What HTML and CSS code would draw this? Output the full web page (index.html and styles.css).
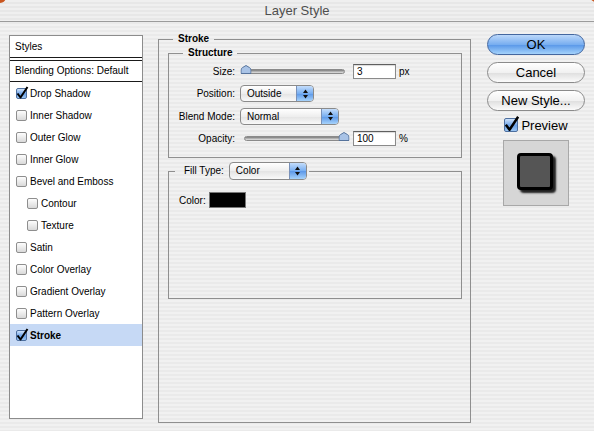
FILE: index.html
```html
<!DOCTYPE html>
<html lang="en">
<head>
    <meta charset="UTF-8">
    <meta name="viewport" content="width=device-width, initial-scale=1.0">
    <title>Layer Style</title>
    <link rel="stylesheet" href="styles.css">
</head>
<body>
    <div class="window">
        <span class="light light-left"></span>
        <span class="light light-right"></span>
        <div class="titlebar">Layer Style</div>

        <div class="content">
            <!-- Effects list -->
            <div class="styles-list">
                <div class="list-head">Styles</div>
                <div class="list-blend">Blending Options: Default</div>
                <ul class="effects">
                    <li><span class="check on"><svg viewBox="0 0 13 13"><path d="M1.5 5.5 L4.5 9.5 L11.5 -1"/></svg></span>Drop Shadow</li>
                    <li><span class="check"></span>Inner Shadow</li>
                    <li><span class="check"></span>Outer Glow</li>
                    <li><span class="check"></span>Inner Glow</li>
                    <li><span class="check"></span>Bevel and Emboss</li>
                    <li class="sub"><span class="check"></span>Contour</li>
                    <li class="sub"><span class="check"></span>Texture</li>
                    <li><span class="check"></span>Satin</li>
                    <li><span class="check"></span>Color Overlay</li>
                    <li><span class="check"></span>Gradient Overlay</li>
                    <li><span class="check"></span>Pattern Overlay</li>
                    <li class="selected"><span class="check on"><svg viewBox="0 0 13 13"><path d="M1.5 5.5 L4.5 9.5 L11.5 -1"/></svg></span>Stroke</li>
                </ul>
            </div>

            <!-- Stroke settings -->
            <fieldset class="group stroke">
                <legend>Stroke</legend>

                <fieldset class="group structure">
                    <legend>Structure</legend>
                    <div class="rows">
                        <label>Size:</label>
                        <div class="slider"><svg class="thumb" style="left: 1%" viewBox="0 0 11 9"><path d="M0.5 8.5 V5 Q0.5 3.5 2 2.6 L5.5 0.5 L9 2.6 Q10.5 3.5 10.5 5 V8.5 Z"/></svg></div>
                        <input type="text" value="3">
                        <span class="unit">px</span>

                        <label>Position:</label>
                        <span class="popup popup-position"><span class="popup-label">Outside</span><span class="popup-arrows"><svg viewBox="0 0 5 10"><path d="M0 4 L2.5 0.5 L5 4 Z M0 6 L2.5 9.5 L5 6 Z"/></svg></span></span>
                        <span></span>
                        <span></span>

                        <label>Blend Mode:</label>
                        <span class="popup popup-blend"><span class="popup-label">Normal</span><span class="popup-arrows"><svg viewBox="0 0 5 10"><path d="M0 4 L2.5 0.5 L5 4 Z M0 6 L2.5 9.5 L5 6 Z"/></svg></span></span>
                        <span></span>
                        <span></span>

                        <label>Opacity:</label>
                        <div class="slider"><svg class="thumb" style="left: 100%" viewBox="0 0 11 9"><path d="M0.5 8.5 V5 Q0.5 3.5 2 2.6 L5.5 0.5 L9 2.6 Q10.5 3.5 10.5 5 V8.5 Z"/></svg></div>
                        <input type="text" value="100">
                        <span class="unit">%</span>
                    </div>
                </fieldset>

                <fieldset class="group fill">
                    <legend>
                        <span>Fill Type:</span>
                        <span class="popup popup-fill"><span class="popup-label">Color</span><span class="popup-arrows"><svg viewBox="0 0 5 10"><path d="M0 4 L2.5 0.5 L5 4 Z M0 6 L2.5 9.5 L5 6 Z"/></svg></span></span>
                    </legend>
                    <div class="color-row">
                        <span>Color:</span>
                        <span class="swatch"></span>
                    </div>
                </fieldset>
            </fieldset>

            <!-- Dialog buttons -->
            <div class="actions">
                <button class="btn btn-default">OK</button>
                <button class="btn">Cancel</button>
                <button class="btn btn-last">New Style...</button>
                <div class="preview-toggle">
                    <span class="check big on"><svg viewBox="0 0 13 13"><path d="M1.5 5.5 L4.5 9.5 L11.5 -1"/></svg></span>
                    <span>Preview</span>
                </div>
                <div class="preview-box">
                    <div class="preview-swatch"></div>
                </div>
            </div>
        </div>
    </div>
</body>
</html>
```

FILE: styles.css
```css
/* Reset */
* {
    margin: 0;
    padding: 0;
    box-sizing: border-box;
}

body {
    width: 594px;
    height: 431px;
    overflow: hidden;
    font-family: "Liberation Sans", Arial, sans-serif;
    font-size: 10px;
    color: #000;
}

/* Window with pinstripes */
.window {
    position: relative;
    width: 594px;
    height: 431px;
    overflow: hidden;
    background: repeating-linear-gradient(to bottom, #f1f1f1 0 2px, #eaeaea 2px 4px);
}

.light {
    position: absolute;
    width: 12px;
    height: 12px;
    border-radius: 50%;
    background: #c9561f;
}

.light-left {
    left: -6px;
    top: -9px;
}

.light-right {
    right: -8px;
    top: -10px;
}

.titlebar {
    height: 22px;
    border-bottom: 1px solid #9b9b9b;
    background: repeating-linear-gradient(to bottom, #efefef 0 2px, #e7e7e7 2px 4px);
    text-align: center;
    font-size: 13px;
    line-height: 21px;
    color: #4e4e4e;
}

.content {
    display: flex;
    align-items: flex-start;
}

/* Styles list */
.styles-list {
    margin: 13px 0 0 9px;
    width: 134px;
    height: 384px;
    border: 1px solid #8c8c8c;
    background: #fff;
}

.list-head {
    height: 22px;
    padding-left: 5px;
    line-height: 21px;
    border-bottom: 1px solid #1a1a1a;
}

.list-blend {
    margin-top: 2px;
    height: 22px;
    padding-left: 5px;
    line-height: 20px;
    border-top: 1px solid #1a1a1a;
    border-bottom: 1px solid #1a1a1a;
}

.effects {
    list-style: none;
}

.effects li {
    display: flex;
    align-items: center;
    gap: 3px;
    height: 22px;
    padding-left: 6px;
}

.effects li.sub {
    padding-left: 17px;
}

.effects li.selected {
    background: #c6d9f5;
    font-weight: bold;
}

/* Checkboxes */
.check {
    position: relative;
    flex: none;
    width: 11px;
    height: 11px;
    border: 1px solid #8e8e8e;
    border-radius: 2px;
    background: linear-gradient(#fdfdfd, #d9d9d9);
}

.check.on {
    border-color: #4d6f9f;
    background: linear-gradient(#cfe3fb, #6aa1e8 55%, #9cc6f3);
}

.check svg {
    position: absolute;
    left: -1px;
    top: -1px;
    width: 13px;
    height: 13px;
    overflow: visible;
}

.check svg path {
    fill: none;
    stroke: #000;
    stroke-width: 2;
    stroke-linejoin: round;
}

.check.big {
    width: 14px;
    height: 14px;
}

.check.big svg {
    width: 16px;
    height: 16px;
}

/* Group boxes */
fieldset.group {
    border: 1px solid #8f8f8f;
    padding: 0;
    min-width: 0;
}

fieldset.group legend {
    margin-left: 14px;
    padding: 0 5px;
    font-weight: bold;
    line-height: 12px;
}

.stroke {
    margin: 11px 0 0 15px;
    width: 313px;
    height: 390px;
}

.structure {
    margin: 2px 8px 0 9px;
    height: 111px;
}

.rows {
    display: grid;
    grid-template-columns: 66px 108px 43px auto;
    grid-auto-rows: 18px;
    column-gap: 5px;
    row-gap: 4.5px;
    align-items: center;
    padding-top: 3px;
}

.rows label {
    text-align: right;
}

.rows input {
    width: 43px;
    height: 15px;
    padding-left: 3px;
    border: 1px solid #8a8a8a;
    border-top-color: #5f5f5f;
    background: #fff;
    font: 10px "Liberation Sans", Arial, sans-serif;
    box-shadow: inset 0 1px 1px rgba(0, 0, 0, 0.15);
    outline: none;
}

.unit {
    margin-left: -2px;
}

/* Sliders */
.slider {
    position: relative;
    height: 5px;
    margin: 0 3px 0 4px;
    border: 1px solid #8a8a8a;
    border-radius: 3px;
    background: linear-gradient(#7a7a7a, #bcbcbc 60%, #e3e3e3);
}

.thumb {
    position: absolute;
    top: -5px;
    width: 11px;
    height: 9px;
    transform: translateX(-50%);
}

.thumb path {
    fill: #a9c3e6;
    stroke: #56739c;
    stroke-width: 1;
}

/* Pop-up menus */
.popup {
    display: inline-flex;
    justify-self: start;
    height: 17px;
    border: 1px solid #8a8a8a;
    border-radius: 4px;
    background: linear-gradient(#ffffff, #eeeeee 50%, #e3e3e3 51%, #f9f9f9);
    overflow: hidden;
    font-weight: normal;
}

.popup-label {
    flex: 1;
    padding-left: 6px;
    line-height: 15px;
}

.popup-arrows {
    display: flex;
    align-items: center;
    justify-content: center;
    width: 17px;
    border-left: 1px solid #7890b8;
    background: linear-gradient(#c4ddfb, #77aef1 50%, #5b97e8 51%, #a7d3fb);
}

.popup-arrows svg {
    width: 5px;
    height: 10px;
    fill: #111;
}

.popup-position {
    width: 74px;
}

.popup-blend {
    width: 99px;
}

.popup-fill {
    width: 78px;
    height: 18px;
}

.popup-fill .popup-label {
    line-height: 16px;
}

/* Fill type */
.fill {
    margin: 4px 8px 0 9px;
    height: 137px;
}

fieldset.fill legend {
    display: flex;
    align-items: center;
    gap: 5px;
    height: 18px;
    margin-left: 6px;
    padding: 0 2px 0 9px;
    font-weight: normal;
    line-height: 18px;
}

.color-row {
    display: flex;
    align-items: center;
    gap: 3px;
    margin: 12px 0 0 10px;
}

.swatch {
    width: 37px;
    height: 16px;
    border: 1px solid #777;
    background: #000;
}

/* Buttons column */
.actions {
    display: flex;
    flex-direction: column;
    align-items: center;
    margin: 12px 0 0 16px;
    width: 98px;
}

.btn {
    width: 100%;
    height: 21px;
    margin-bottom: 7px;
    border: 1px solid #8b8b8b;
    border-radius: 11px;
    background: linear-gradient(#ffffff, #f1f1f1 50%, #dedede 51%, #fbfbfb);
    font: 13px/19px "Liberation Sans", Arial, sans-serif;
    color: #000;
    text-align: center;
}

.btn-default {
    border-color: #44679f;
    background: linear-gradient(#bcd8fa, #78aef0 50%, #5796e8 51%, #a4d2fb);
}

.btn-last {
    margin-bottom: 6px;
}

.preview-toggle {
    display: flex;
    align-items: center;
    gap: 3px;
    height: 16px;
    font-size: 13px;
}

.preview-box {
    display: flex;
    align-items: center;
    justify-content: center;
    margin-top: 7px;
    width: 66px;
    height: 66px;
    border: 1px solid #a8a8a8;
    background: #d6d6d6;
}

.preview-swatch {
    width: 36px;
    height: 37px;
    margin: 0 3px 3px 0;
    border: 3px solid #000;
    border-radius: 4px;
    background: #555;
    box-shadow: 3px 3px 2px rgba(0, 0, 0, 0.85);
}
```
